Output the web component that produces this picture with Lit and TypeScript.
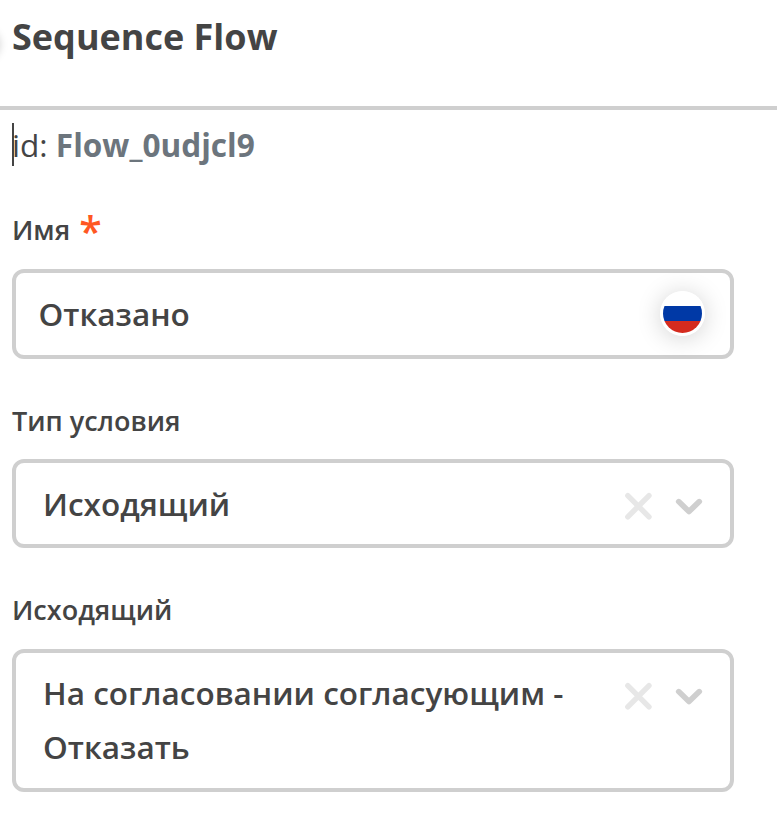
import { LitElement, html, css } from "lit";
import { customElement } from "lit/decorators.js";

const clearIcon = html`<svg width="28" height="28" viewBox="0 0 28 28"><path d="M3.8 3.6L25 24.8M25 3.6L3.8 24.8" fill="none" stroke="#e7e7e7" stroke-width="5.4" stroke-linecap="round"/></svg>`;
const chevron = html`<svg width="28" height="20" viewBox="0 0 28 20"><path d="M3.7 5.6L14 15.6L24.3 5.6" fill="none" stroke="#cfcfcf" stroke-width="5.6" stroke-linecap="round" stroke-linejoin="round"/></svg>`;

@customElement("app-root")
export class AppRoot extends LitElement {
  static styles = css`
    :host { display: block; height: 815px; overflow: hidden; background: #fff; color: #444;
      font-family: "Open Sans", "Noto Sans", sans-serif; position: relative; }
    * { box-sizing: border-box; }
    header { height: 110px; border-bottom: 4px solid #cfcfcf; padding: 10px 0 0 12px; }
    h1 { margin: 0; font-size: 36px; line-height: 54px; font-weight: 700; white-space: nowrap; }
    .edge { position: absolute; left: -30px; top: 28px; width: 29px; height: 29px; border-radius: 50%; box-shadow: 0 2px 10px rgba(0,0,0,.22); }
    .ident { margin: 13px 0 0 12px; height: 43px; box-shadow: inset 2px 0 #444; font-size: 31.6px; line-height: 43px; white-space: nowrap; }
    .ident b { color: #6c757d; }
    .field { width: 722px; margin-left: 12px; }
    .label { height: 40px; line-height: 39px; font-size: 27px; font-weight: 600; white-space: nowrap; display: flex; }
    .star { color: #ff5722; font-size: 41px; font-weight: 600; margin-left: 9px; line-height: 40px; }
    .box { border: 4px solid #cfcfcf; border-radius: 12px; display: flex; justify-content: space-between; font-size: 31.5px; line-height: 54px; font-weight: 600; }
    .name { margin-top: 44px; }
    .name .box { height: 90px; margin-top: 19px; padding: 14px 25px 0 22.5px; }
    .type { margin-top: 42px; }
    .type .box { height: 89px; margin-top: 18px; padding: 14px 27px 0 27px; }
    .out { margin-top: 42px; }
    .out .box { height: 143px; margin-top: 19px; padding: 13px 27px 0 27px; }
    .tools { display: flex; gap: 23px; height: 58px; align-items: center; }
    .out .tools { height: 60px; }
    .flag { width: 45px; height: 45px; border-radius: 50%; box-shadow: 0 2px 24px rgba(0,0,0,.18); margin-top: 4px; }
  `;
  render() {
    return html`
      <header><div class="edge"></div><h1>Sequence Flow</h1></header>
      <div class="ident">id: <b>Flow_0udjcl9</b></div>
      <div class="field name"><div class="label">Имя<span class="star">*</span></div>
        <div class="box"><span>Отказано</span>
          <svg class="flag" viewBox="0 0 45 45"><defs><clipPath id="c"><circle cx="22.5" cy="22.5" r="19.5"/></clipPath></defs>
            <circle cx="22.5" cy="22.5" r="22.5" fill="#fff"/><g clip-path="url(#c)"><rect y="15" width="45" height="15" fill="#0039a6"/><rect y="30" width="45" height="15" fill="#d52b1e"/></g></svg>
        </div></div>
      <div class="field type"><div class="label">Тип условия</div>
        <div class="box"><span>Исходящий</span><span class="tools">${clearIcon}${chevron}</span></div></div>
      <div class="field out"><div class="label">Исходящий</div>
        <div class="box"><span>На согласовании согласующим -<br>Отказать</span><span class="tools">${clearIcon}${chevron}</span></div></div>
    `;
  }
}
